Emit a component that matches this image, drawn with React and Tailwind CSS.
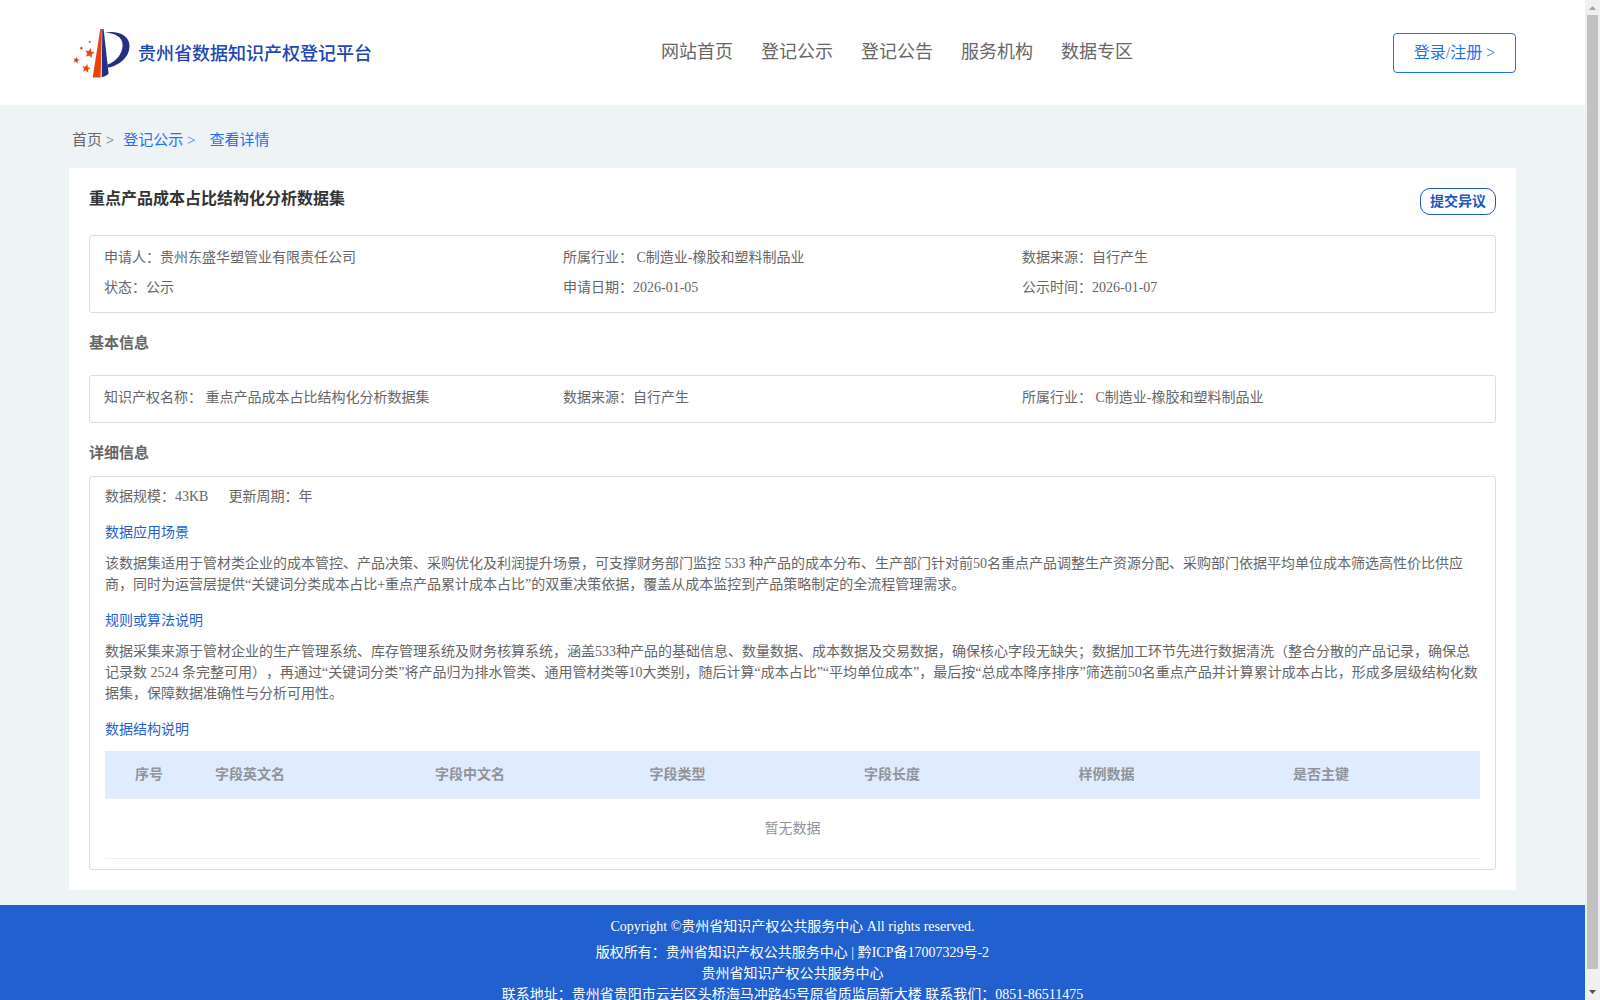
const NAV = ['网站首页', '登记公示', '登记公告', '服务机构', '数据专区'];

const SUMMARY = [
  ['申请人：', '贵州东盛华塑管业有限责任公司'],
  ['所属行业：', ' C制造业-橡胶和塑料制品业'],
  ['数据来源：', '自行产生'],
  ['状态：', '公示'],
  ['申请日期：', '2026-01-05'],
  ['公示时间：', '2026-01-07'],
];

const BASIC = [
  ['知识产权名称：', ' 重点产品成本占比结构化分析数据集'],
  ['数据来源：', '自行产生'],
  ['所属行业：', ' C制造业-橡胶和塑料制品业'],
];

const COLUMNS = [
  ['字段英文名', 'w-[16%]'],
  ['字段中文名', 'w-[15.6%]'],
  ['字段类型', 'w-[15.6%]'],
  ['字段长度', 'w-[15.6%]'],
  ['样例数据', 'w-[15.6%]'],
  ['是否主键', ''],
];

const STARS = [
  [17.7, 25.2, 5.2],
  [4.3, 32.2, 3.4],
  [14.3, 40.5, 4.6],
  [9.3, 20.2, 2],
  [17.7, 13.8, 1.5],
];

function Logo() {
  return (
    <svg className="h-[50px] w-[58px] shrink-0" viewBox="0 0 58 50" aria-hidden="true">
      <path d="M28.300 1H30L28.600 49.500H20.700z" fill="#e8430f" />
      <path d="M30.300 1h1.300l5 44.700c-2 1.800-4.300 3-6.900 3.600z" fill="#252f85" />
      <path d="M32 4.600C46 2 57.500 7 57.500 18 57.500 29.500 47 37.500 35.900 39.800l-.4-3.200C43 34 50.600 26.500 50.600 17 50.600 8.500 42 5 32 4.600z" fill="#252f85" />
      {STARS.map(([x, y, r]) => (
        <path
          key={`${x}-${y}`}
          d="M0-1L.26-.36.95-.31.42.14.59.81 0 .45-.59.81-.42.14-.95-.31-.26-.36z"
          transform={`translate(${x} ${y}) rotate(12) scale(${r})`}
          fill="#e8430f"
        />
      ))}
    </svg>
  );
}

function InfoGrid({ items }) {
  return (
    <dl className="grid grid-cols-3 rounded-[3px] border border-[#dddddd] px-[14px] pt-[7px] pb-[9px] leading-[30px]">
      {items.map(([label, value]) => (
        <div key={label} className="flex whitespace-pre">
          <dt>{label}</dt>
          <dd>{value}</dd>
        </div>
      ))}
    </dl>
  );
}

function SubHeading({ children }) {
  return <h3 className="mt-[15px] mb-[10px] text-[#1f5fd0]">{children}</h3>;
}

function ScrollRail() {
  return (
    <div className="flex w-[15px] shrink-0 flex-col items-center bg-[#f0f0f0]" aria-hidden="true">
      <svg className="h-[15px] w-[15px]" viewBox="0 0 15 15"><path d="M4 10h7L7.500 6z" fill="#a3a3a3" /></svg>
      <div className="w-[11px] flex-1 bg-[#c1c1c1]" />
      <div className="flex h-[31px] items-end">
        <svg className="h-[15px] w-[15px]" viewBox="0 0 15 15"><path d="M4 5h7L7.500 9z" fill="#505050" /></svg>
      </div>
    </div>
  );
}

export default function App() {
  return (
    <div className="flex h-screen overflow-hidden bg-[#eef3f6] font-['Liberation_Serif','Noto_Sans_CJK_SC',serif] text-[14px] leading-[21px] text-[#666666] [text-spacing-trim:space-all]">
      <div className="min-w-0 flex-1 overflow-hidden">
        <header className="flex h-[105px] items-center justify-between bg-white px-[69px]">
          <a href="#" className="flex w-[332px] items-center gap-2 pl-[3px]">
            <Logo />
            <span className="whitespace-nowrap pt-1 text-[18px] font-medium text-[#2145b5]">贵州省数据知识产权登记平台</span>
          </a>
          <nav className="flex gap-7 text-[18px]">
            {NAV.map((n) => (
              <a key={n} href="#" className="whitespace-nowrap">{n}</a>
            ))}
          </nav>
          <button type="button" className="h-10 w-[123px] whitespace-nowrap rounded-[4px] border border-[#1c72f0] text-[16px] text-[#1c72f0]">
            登录/注册 &gt;
          </button>
        </header>

        <main className="px-[69px] pb-[15px]">
          <nav className="flex h-[63px] items-center gap-[9px] px-[3px] pt-[7px] text-[15px] text-[#1c72f0]" aria-label="面包屑">
            <a href="#" className="text-[#666666]">首页 &gt;</a>
            <a href="#">登记公示 &gt;</a>
            <a href="#" className="pl-[5px]">查看详情</a>
          </nav>

          <section className="bg-white p-5">
            <div className="flex justify-between">
              <h1 className="text-[16px] font-bold text-[#333333]">重点产品成本占比结构化分析数据集</h1>
              <button type="button" className="h-[27px] w-[76px] rounded-[10px] border border-[#1a58c4] font-bold text-[#1a58c4]">提交异议</button>
            </div>
            <div className="mt-5">
              <InfoGrid items={SUMMARY} />
            </div>

            <h2 className="mt-5 mb-[21px] text-[15px] font-bold">基本信息</h2>
            <InfoGrid items={BASIC} />

            <h2 className="mt-5 mb-3 text-[15px] font-bold">详细信息</h2>
            <div className="rounded-[3px] border border-[#dddddd] px-[15px] pt-[9px] pb-[10px]">
              <p className="flex gap-5">
                <span>数据规模：43KB</span>
                <span>更新周期：年</span>
              </p>
              <SubHeading>数据应用场景</SubHeading>
              <p>
                该数据集适用于管材类企业的成本管控、产品决策、采购优化及利润提升场景，可支撑财务部门监控 533 种产品的成本分布、生产部门针对前50名重点产品调整生产资源分配、采购部门依据平均单位成本筛选高性价比供应商，同时为运营层提供“关键词分类成本占比+重点产品累计成本占比”的双重决策依据，覆盖从成本监控到产品策略制定的全流程管理需求。
              </p>
              <SubHeading>规则或算法说明</SubHeading>
              <p>
                数据采集来源于管材企业的生产管理系统、库存管理系统及财务核算系统，涵盖533种产品的基础信息、数量数据、成本数据及交易数据，确保核心字段无缺失；数据加工环节先进行数据清洗（整合分散的产品记录，确保总记录数 2524 条完整可用），再通过“关键词分类”将产品归为排水管类、通用管材类等10大类别，随后计算“成本占比”“平均单位成本”，最后按“总成本降序排序”筛选前50名重点产品并计算累计成本占比，形成多层级结构化数据集，保障数据准确性与分析可用性。
              </p>
              <SubHeading>数据结构说明</SubHeading>
              <table className="mt-[11px] w-full table-fixed border-collapse text-[#909399]">
                <thead>
                  <tr className="h-[47px] border-b border-[#ebeef5] bg-[#dfecff] text-left">
                    <th scope="col" className="w-[100px] pl-[30px] font-bold">序号</th>
                    {COLUMNS.map(([name, width]) => (
                      <th key={name} scope="col" className={`pl-[10px] font-bold ${width}`}>{name}</th>
                    ))}
                  </tr>
                </thead>
                <tbody>
                  <tr className="h-[60px] border-b border-[#ebeef5] text-center">
                    <td colSpan={7}>暂无数据</td>
                  </tr>
                </tbody>
              </table>
            </div>
          </section>
        </main>

        <footer className="bg-[#2160cf] pt-[11px] pb-5 text-center text-white">
          <p className="mb-[5px]">Copyright ©贵州省知识产权公共服务中心 All rights reserved.</p>
          <p>版权所有：贵州省知识产权公共服务中心 | <a href="#">黔ICP备17007329号-2</a></p>
          <p>贵州省知识产权公共服务中心</p>
          <p>联系地址：贵州省贵阳市云岩区头桥海马冲路45号原省质监局新大楼 联系我们：0851-86511475</p>
        </footer>
      </div>
      <ScrollRail />
    </div>
  );
}
